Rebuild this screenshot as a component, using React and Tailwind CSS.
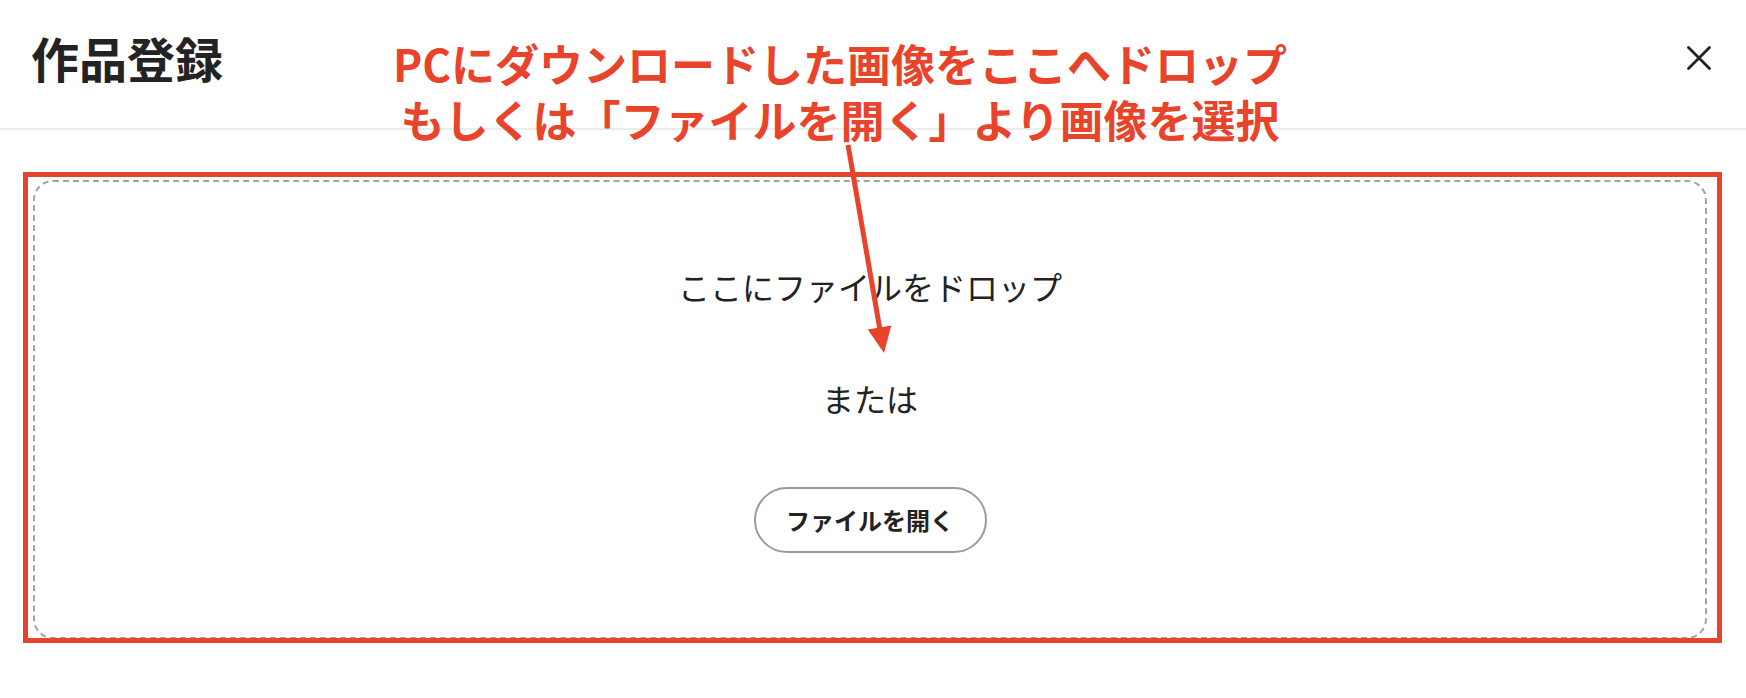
export default function App() {
  const font = { fontFamily: '"Noto Sans CJK JP", "Noto Sans", sans-serif' };
  return (
    <div
      className="relative w-[1746px] h-[698px] bg-white overflow-hidden text-[#222222]"
      style={font}
    >
      {/* header */}
      <div className="flex items-start justify-between h-[130px] border-b-2 border-[#ececea] pl-[31px] pr-[35px] pt-[25px]">
        <h1 className="text-[48px] leading-[64px] font-bold text-[#232323]">作品登録</h1>
        <button className="mt-[21px] w-[24px] h-[24px] flex items-center justify-center">
          <svg width="24" height="24" viewBox="0 0 24 24">
            <path d="M1.5 1.5 L22.5 22.5 M22.5 1.5 L1.5 22.5" stroke="#222222" strokeWidth="2.8" strokeLinecap="round" />
          </svg>
        </button>
      </div>

      {/* drop zone */}
      <div className="pl-[33px] pr-[39px] pt-[50px]">
        <div className="h-[459px] rounded-[20px] border-2 border-dashed border-[#a3a3a3] flex flex-col items-center pt-[80px]">
          <p className="text-[32px] leading-[48px] text-[#222222]">ここにファイルをドロップ</p>
          <p className="mt-[64px] text-[32px] leading-[48px] text-[#222222]">または</p>
          <button className="mt-[65px] w-[233px] h-[66px] rounded-full border-2 border-[#9b9b9b] bg-white text-[24px] font-bold text-[#222222] flex items-center justify-center">
            ファイルを開く
          </button>
        </div>
      </div>

      {/* annotation: red frame */}
      <div className="absolute left-[23px] top-[172px] w-[1699px] h-[471px] border-[5px] border-[#e8432b] pointer-events-none" />

      {/* annotation: text */}
      <div className="absolute left-[340px] w-[1000px] top-[35px] text-center text-[44px] leading-[56px] font-bold text-[#e8432b]">
        <div>PCにダウンロードした画像をここへドロップ</div>
        <div>もしくは「ファイルを開く」より画像を選択</div>
      </div>

      {/* annotation: arrow */}
      <svg className="absolute left-0 top-0 pointer-events-none" width="1746" height="698" viewBox="0 0 1746 698">
        <line x1="848" y1="145" x2="880" y2="330" stroke="#e8432b" strokeWidth="5" />
        <polygon points="891.3,325.4 867.7,329.4 884,353" fill="#e8432b" />
      </svg>
    </div>
  );
}
